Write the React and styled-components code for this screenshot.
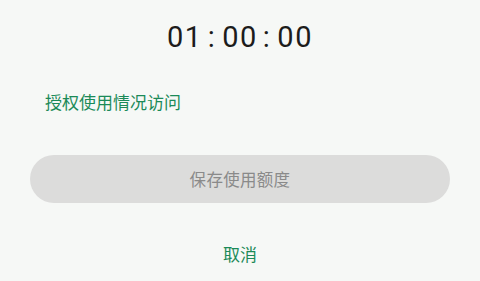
import React from 'react';
import styled, { createGlobalStyle } from 'styled-components';

const GlobalStyle = createGlobalStyle`
  html, body {
    margin: 0;
    padding: 0;
    background: #f6f8f6;
  }
  body {
    font-family: "Noto Sans", "Noto Sans CJK SC", sans-serif;
  }
`;

const Page = styled.div`
  width: 480px;
  height: 281px;
  display: flex;
  flex-direction: column;
  background: #f6f8f6;
  overflow: hidden;
`;

const Timer = styled.div`
  margin-top: 17px;
  display: flex;
  justify-content: center;
  font-family: "Roboto", sans-serif;
  font-size: 29px;
  line-height: 40px;
  letter-spacing: 1.5px;
  color: #1c1c1c;
`;

const Colon = styled.span`
  margin: 0 6px 0 5px;
`;

const Link = styled.div`
  margin: 33px 0 0 45px;
  font-family: "Noto Sans CJK SC", sans-serif;
  font-size: 17px;
  line-height: 24px;
  color: #1b8a58;
  text-align: ${p => p.align || 'left'};
`;

const SaveButton = styled.button`
  margin: 41px 30px 0;
  height: 48px;
  border: none;
  border-radius: 24px;
  background: #dcdcdb;
  color: #8a8a8a;
  font-family: "Noto Sans CJK SC", sans-serif;
  font-size: 16.5px;
  letter-spacing: 0.3px;
`;

const Cancel = styled(Link)`
  margin: 39px 0 0;
`;

export default function App() {
  return (
    <>
      <GlobalStyle />
      <Page>
        <Timer>
          <span>01</span><Colon>:</Colon><span>00</span><Colon>:</Colon><span>00</span>
        </Timer>
        <Link>授权使用情况访问</Link>
        <SaveButton>保存使用额度</SaveButton>
        <Cancel align="center">取消</Cancel>
      </Page>
    </>
  );
}
